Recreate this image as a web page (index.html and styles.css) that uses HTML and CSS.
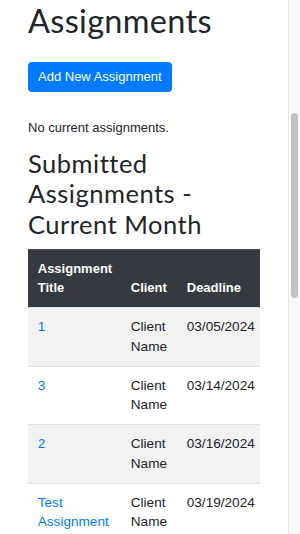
FILE: index.html
```html
<!DOCTYPE html>
<html>
    <head>
        <link rel="stylesheet" href="styles.css">
    </head>
    <body>
        <div class="page">
            <div class="content">
                <h1 class="page-title">Assignments</h1>
                <div class="actions">
                    <a class="btn-primary" href="#">Add New Assignment</a>
                </div>
                <p class="empty-note">No current assignments.</p>
                <h2 class="section-title">Submitted Assignments - Current Month</h2>
                <div class="table-wrap">
                    <table class="assign-table">
                        <colgroup>
                            <col class="col-title">
                            <col class="col-client">
                            <col class="col-deadline">
                        </colgroup>
                        <thead>
                            <tr>
                                <th>Assignment Title</th>
                                <th>Client</th>
                                <th>Deadline</th>
                            </tr>
                        </thead>
                        <tbody>
                            <tr>
                                <td><a href="#">1</a></td>
                                <td>Client Name</td>
                                <td>03/05/2024</td>
                            </tr>
                            <tr>
                                <td><a href="#">3</a></td>
                                <td>Client Name</td>
                                <td>03/14/2024</td>
                            </tr>
                            <tr>
                                <td><a href="#">2</a></td>
                                <td>Client Name</td>
                                <td>03/16/2024</td>
                            </tr>
                            <tr>
                                <td><a href="#">Test Assignment</a></td>
                                <td>Client Name</td>
                                <td>03/19/2024</td>
                            </tr>
                        </tbody>
                    </table>
                </div>
            </div>
            <!-- fake scrollbar, page is scrolled a bit in the screenshot -->
            <div class="scrollbar">
                <div class="scroll-thumb"></div>
            </div>
        </div>
    </body>
</html>
```
FILE: styles.css
```css
html, body {
    margin: 0;
    height: 534px;
    overflow: hidden;
}
body {
    font-family: "Liberation Sans", Arial, sans-serif;
    font-size: 13px;
    line-height: 1.5;
    color: #212529;
    background: #fff;
}
.page {
    display: flex;
    height: 534px;
}
.content {
    flex: 1;
    min-width: 0;
    padding: 2px 28px 0 28px;
}
.page-title {
    font-family: Lato, "Open Sans", sans-serif;
    font-weight: 400;
    font-size: 32.5px;
    letter-spacing: 0.3px;
    line-height: 38.4px;
    margin: 0 0 21.6px 0;
}
.actions {
    display: flex;
}
.btn-primary {
    display: block;
    height: 30px;
    line-height: 30px;
    padding: 0 10px;
    background-color: #007bff;
    color: #fff;
    border-radius: 4px;
    font-size: 13px;
    text-decoration: none;
}
.empty-note {
    margin: 26px 0 0 0;
    line-height: 19.5px;
}
.section-title {
    font-family: Lato, "Open Sans", sans-serif;
    font-weight: 400;
    font-size: 25.5px;
    letter-spacing: 0.5px;
    line-height: 30.5px;
    margin: 10px 0 9.5px 0;
}
.table-wrap {
    overflow: hidden;
}
.assign-table {
    font: inherit;
    border-collapse: collapse;
    table-layout: fixed;
    width: 237px;
}
.col-title {
    width: 93px;
}
.col-client {
    width: 56px;
}
.col-deadline {
    width: 88px;
}
.assign-table th, .assign-table td {
    padding: 9.25px 9.75px;
    line-height: 19.5px;
    text-align: left;
    vertical-align: top;
    border-top: 1px solid #dee2e6;
}
.assign-table td {
    font-size: 13.6px;
}
.assign-table th {
    background-color: #343a40;
    color: #fff;
    font-weight: bold;
    vertical-align: bottom;
    border-top-color: #454d55;
}
.assign-table tbody tr:nth-child(odd) {
    background-color: #f2f2f2;
}
.assign-table a {
    color: #007bff;
    text-decoration: none;
}
.scrollbar {
    width: 11px;
    flex-shrink: 0;
    background: #fafafa;
    border-left: 1px solid #e8e8e8;
}
.scroll-thumb {
    margin: 113px 2px 0 2px;
    height: 185px;
    background: #c1c1c1;
    border-radius: 4px;
}
```
